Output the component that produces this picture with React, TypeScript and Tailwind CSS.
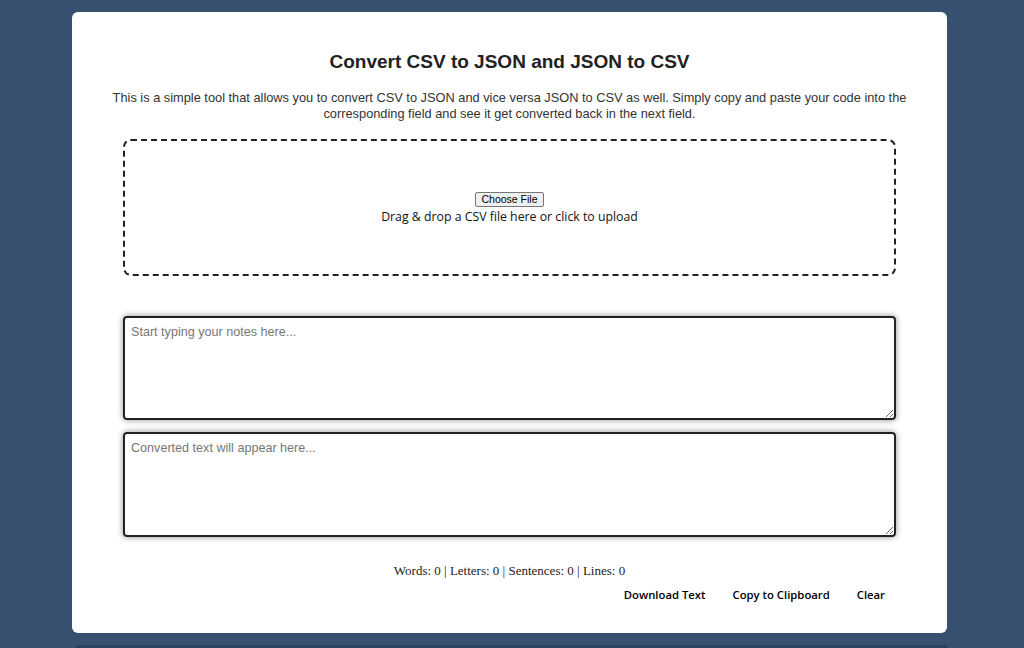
export default function App() {
  return (
    <div className="h-[648px] overflow-hidden bg-[#37506f] pt-[12px] font-['Liberation_Sans',Arial,sans-serif]">
      <div className="ml-[72px] w-[875px] h-[621px] rounded-[6px] bg-white px-[51px] pt-[39px]">
        <h1 className="text-center text-[19px] font-bold leading-[22px] text-[#222]">
          Convert CSV to JSON and JSON to CSV
        </h1>
        <p className="mx-[-12px] mt-[17px] text-center text-[12.8px] leading-[16px] text-[#333]">
          This is a simple tool that allows you to convert CSV to JSON and vice versa JSON to CSV as well. Simply copy and paste your code into the corresponding field and see it get converted back in the next field.
        </p>
        <div className="mt-[17px] flex h-[137px] flex-col items-center justify-center rounded-[8px] border-2 border-dashed border-[#222]">
          <button className="mt-[2px] rounded-[2px] border border-[#767676] bg-[#efefef] px-[5px] text-[10.5px] leading-[13px] text-black">
            Choose File
          </button>
          <span className="mt-[1px] font-['Open_Sans',sans-serif] text-[12.3px] leading-[18px] text-[#111]">
            Drag &amp; drop a CSV file here or click to upload
          </span>
        </div>
        <textarea
          placeholder="Start typing your notes here..."
          className="mt-[40px] block h-[104px] w-full resize-y rounded-[4px] border-2 border-[#222] px-[6px] py-[6px] text-[12.6px] leading-[16px] shadow-[0_0_6px_rgba(0,0,0,0.45)] outline-none placeholder:text-[#777]"
        />
        <textarea
          placeholder="Converted text will appear here..."
          className="mt-[12px] block h-[105px] w-full resize-y rounded-[4px] border-2 border-[#222] px-[6px] py-[6px] text-[12.6px] leading-[16px] shadow-[0_0_6px_rgba(0,0,0,0.45)] outline-none placeholder:text-[#777]"
        />
        <div className="mt-[26px] text-center font-['Liberation_Serif',Georgia,serif] text-[13px] leading-[16px] text-[#222]">
          Words: 0 | Letters: 0 | Sentences: 0 | Lines: 0
        </div>
        <div className="mt-[7px] flex justify-end gap-[27px] pr-[11px] font-['Open_Sans',sans-serif] text-[11.3px] font-semibold leading-[18px] text-black">
          <button>Download Text</button>
          <button>Copy to Clipboard</button>
          <button>Clear</button>
        </div>
      </div>
      <div className="ml-[76px] mt-[12px] h-[3px] w-[871px] bg-[#2b415c]" />
    </div>
  );
}
